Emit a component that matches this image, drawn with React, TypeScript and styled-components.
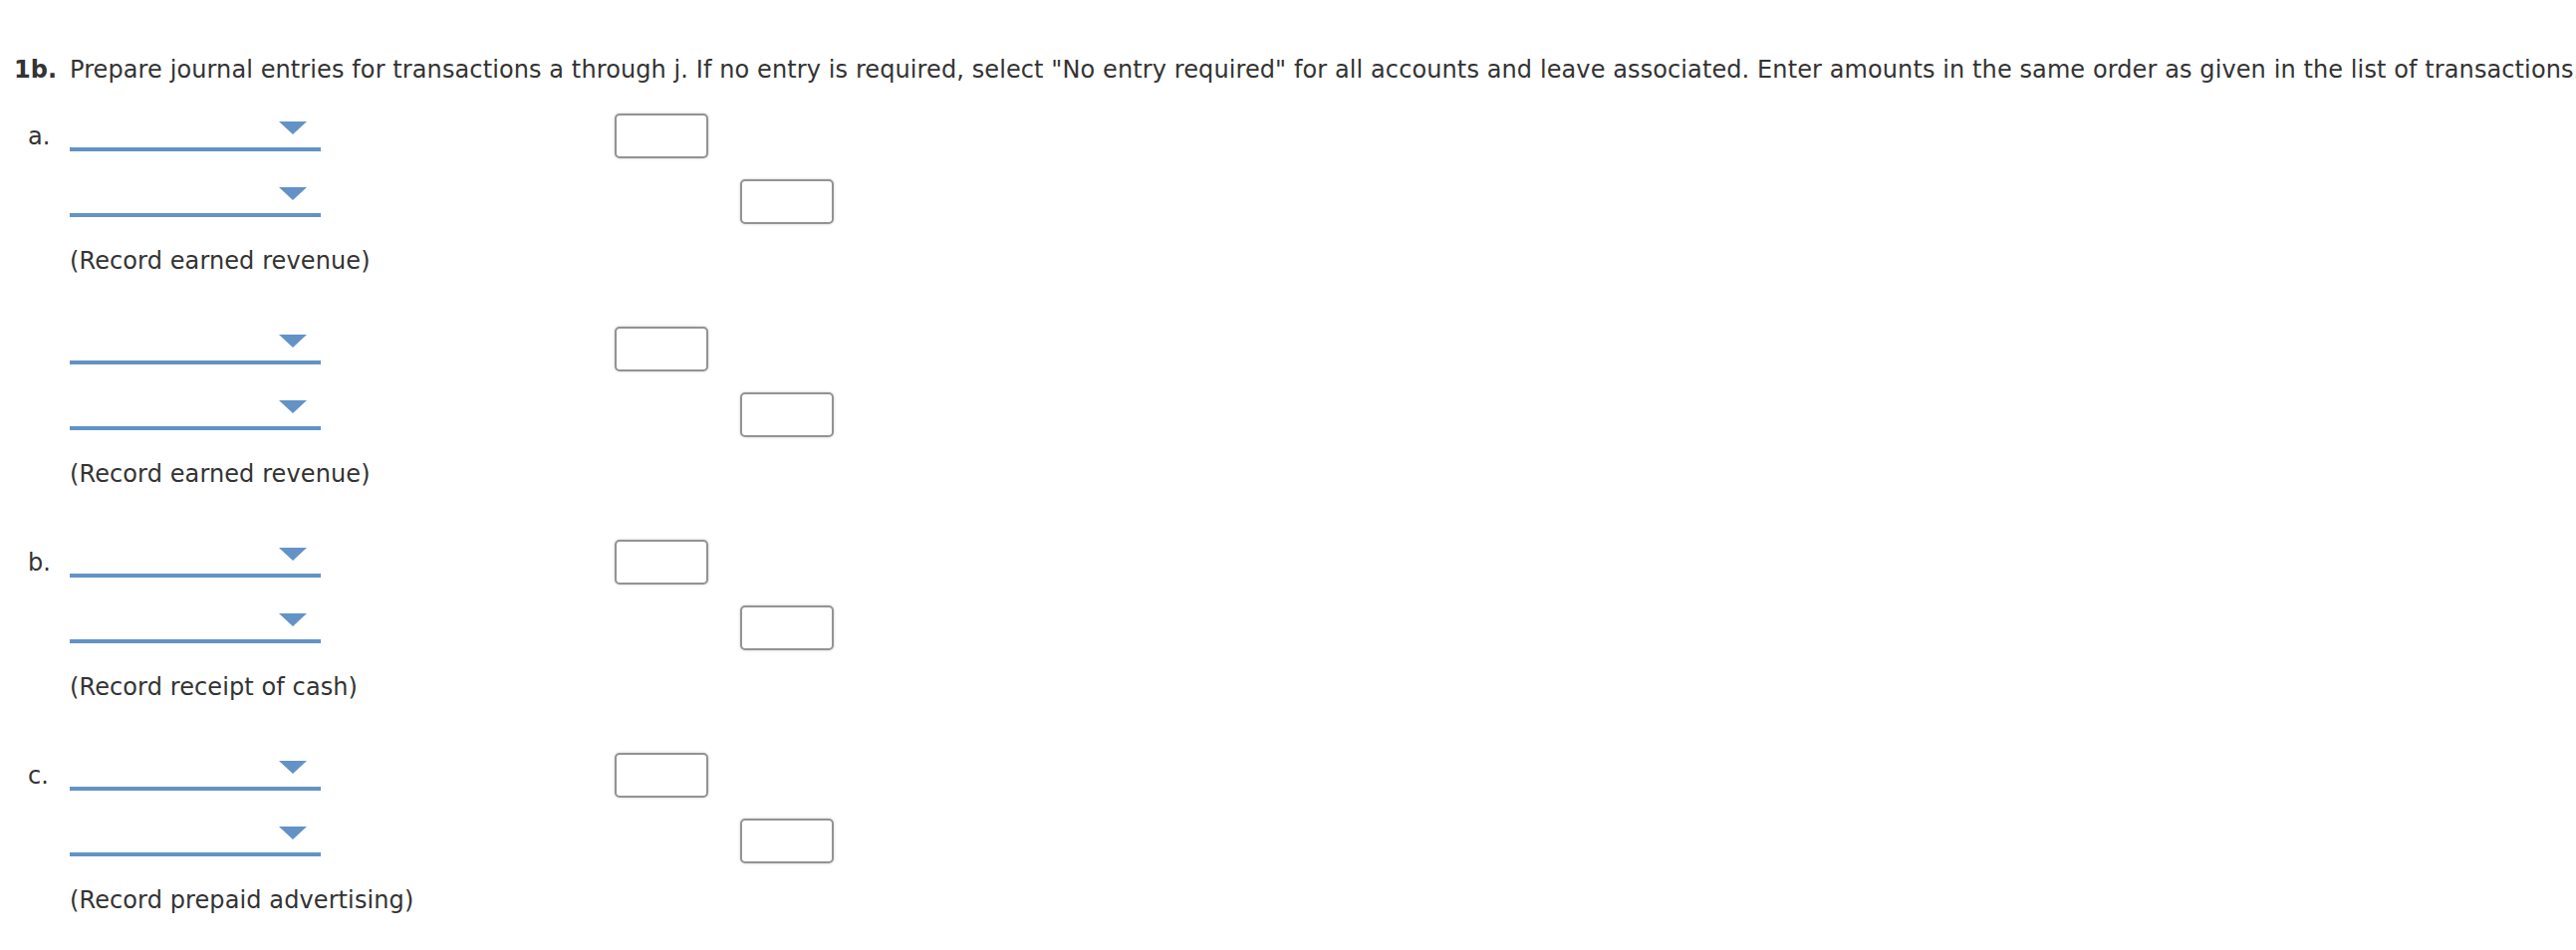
import React from 'react';
import styled, { createGlobalStyle } from 'styled-components';

type Entry = {
  label: string;
  note: string;
};

const entries: Entry[] = [
  { label: 'a.', note: '(Record earned revenue)' },
  { label: '', note: '(Record earned revenue)' },
  { label: 'b.', note: '(Record receipt of cash)' },
  { label: 'c.', note: '(Record prepaid advertising)' },
];

function AccountSelect() {
  return (
    <Dropdown>
      <Caret />
    </Dropdown>
  );
}

function JournalEntry({ label, note }: Entry) {
  return (
    <Group>
      <Row>
        <Label>{label}</Label>
        <AccountSelect />
        <AmountCell $offset={295}>
          <AmountInput type="text" aria-label="debit" />
        </AmountCell>
      </Row>
      <Row>
        <Label />
        <AccountSelect />
        <AmountCell $offset={421}>
          <AmountInput type="text" aria-label="credit" />
        </AmountCell>
      </Row>
      <Note>{note}</Note>
    </Group>
  );
}

export default function App() {
  return (
    <>
      <GlobalStyle />
      <Page>
        <Instructions>
          <Strong>1b.</Strong> Prepare journal entries for transactions a through j. If no entry is
          required, select "No entry required" for all accounts and leave associated. Enter amounts
          in the same order as given in the list of transactions.
        </Instructions>
        {entries.map((entry, i) => (
          <JournalEntry key={i} {...entry} />
        ))}
      </Page>
    </>
  );
}

const GlobalStyle = createGlobalStyle`
  body {
    margin: 0;
    background: #fff;
    color: #333;
    font-family: "DejaVu Sans", Verdana, sans-serif;
    overflow: hidden;
  }
`;

const Page = styled.div`
  padding: 55px 14px 0;
  font-size: 24px;
  line-height: 30px;
  letter-spacing: 0.1px;
`;

const Instructions = styled.p`
  margin: 0 0 8px;
  white-space: nowrap;
`;

const Strong = styled.strong`
  font-weight: bold;
  margin-right: 5px;
`;

const Group = styled.div`
  padding: 0 0 30px 14px;
`;

const Row = styled.div`
  display: flex;
  align-items: flex-end;
  height: 66px;
`;

const Label = styled.span`
  width: 42px;
  margin-bottom: 7px;
`;

const Dropdown = styled.div`
  box-sizing: border-box;
  width: 252px;
  height: 40px;
  margin-bottom: 7px;
  padding: 0 14px 13px 0;
  border-bottom: 4px solid #6393c6;
  display: flex;
  justify-content: flex-end;
  align-items: flex-end;
`;

const Caret = styled.span`
  width: 0;
  height: 0;
  border-left: 14px solid transparent;
  border-right: 14px solid transparent;
  border-top: 13px solid #6393c6;
`;

const AmountCell = styled.div<{ $offset: number }>`
  margin-left: ${(p) => p.$offset}px;
  display: flex;
`;

const AmountInput = styled.input`
  box-sizing: border-box;
  width: 94px;
  height: 45px;
  border: 2px solid #939393;
  border-radius: 5px;
  background: #fff;
  box-shadow: 0 0 3px rgba(0, 0, 0, 0.2);
  font: inherit;
  padding: 0 6px;
  outline: none;
`;

const Note = styled.div`
  margin: 22px 0 0 42px;
`;
